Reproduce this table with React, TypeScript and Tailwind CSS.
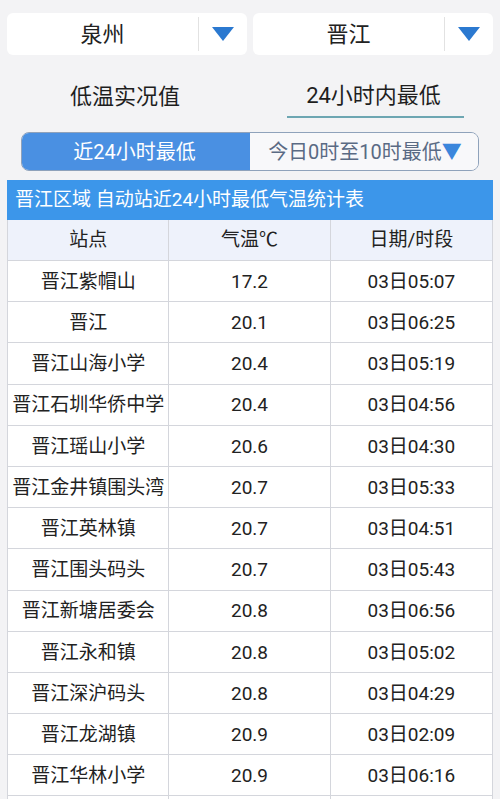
import React from "react";

const rows: [string, string, string][] = [
  ["晋江紫帽山", "17.2", "03日05:07"],
  ["晋江", "20.1", "03日06:25"],
  ["晋江山海小学", "20.4", "03日05:19"],
  ["晋江石圳华侨中学", "20.4", "03日04:56"],
  ["晋江瑶山小学", "20.6", "03日04:30"],
  ["晋江金井镇围头湾", "20.7", "03日05:33"],
  ["晋江英林镇", "20.7", "03日04:51"],
  ["晋江围头码头", "20.7", "03日05:43"],
  ["晋江新塘居委会", "20.8", "03日06:56"],
  ["晋江永和镇", "20.8", "03日05:02"],
  ["晋江深沪码头", "20.8", "03日04:29"],
  ["晋江龙湖镇", "20.9", "03日02:09"],
  ["晋江华林小学", "20.9", "03日06:16"],
];

function Tri() {
  return (
    <svg width="22" height="14" viewBox="0 0 22 14">
      <polygon points="0,0 22,0 11,14" fill="#2b79d0" />
    </svg>
  );
}

function Select({ label }: { label: string }) {
  return (
    <div className="flex-1 h-[42px] bg-white rounded-[6px] flex">
      <div className="flex-1 flex items-center justify-center text-[22px] text-[#222]">{label}</div>
      <div className="w-px bg-[#e2e2e2] my-[4px]" />
      <div className="w-[48px] flex items-center justify-center pr-[1px]">
        <Tri />
      </div>
    </div>
  );
}

export default function App() {
  return (
    <div
      className="w-[500px] h-[799px] overflow-hidden bg-[#f3f3f5]"
      style={{ fontFamily: '"Roboto", "Noto Sans CJK SC", sans-serif' }}
    >
      <div className="pt-[13px] px-[7px] flex gap-[6px]">
        <Select label="泉州" />
        <Select label="晋江" />
      </div>

      <div className="h-[70px] flex">
        <div className="flex-1 flex items-center justify-center pt-[12px] text-[22px] text-[#1e1e1e]">低温实况值</div>
        <div className="flex-1 flex items-center justify-center pt-[12px]">
          <div className="w-[177px] h-[44px] flex items-center justify-center text-[22px] text-[#1e1e1e] border-b-2 border-[#6da6b2] pr-[3px]">
            24小时内最低
          </div>
        </div>
      </div>

      <div className="mt-[7px] mx-[21px] h-[39px] rounded-[8px] border border-[#8fa2bb] flex overflow-hidden">
        <div className="w-[228px] bg-[#4a90e2] text-white text-[20px] flex items-center justify-center pr-[3px]">
          近24小时最低
        </div>
        <div className="flex-1 bg-[#f8f8fa] text-[#5a6a84] text-[20px] flex items-center justify-center pl-[2px]">
          今日0时至10时最低<span className="text-[#3b86dc]">▼</span>
        </div>
      </div>

      <div className="mt-[9px] mx-[7px]">
        <div className="h-[40px] bg-[#3c96ea] text-white text-[19px] flex items-center pl-[8px]">
          晋江区域 自动站近24小时最低气温统计表
        </div>
        <div className="grid grid-cols-3 h-[41px] bg-[#eef2fb] border-l border-r border-b border-[#d4d6dc] text-[19px] text-[#222]">
          <div className="flex items-center justify-center border-r border-[#d4d6dc] pt-[1px]">站点</div>
          <div className="flex items-center justify-center border-r border-[#d4d6dc] pt-[1px]">气温℃</div>
          <div className="flex items-center justify-center pt-[1px]">日期/时段</div>
        </div>
        {rows.map((r, i) => (
          <div
            key={i}
            className="grid grid-cols-3 h-[41.2px] bg-white border-l border-r border-b border-[#d4d6dc] text-[19px] text-[#222]"
          >
            <div className="flex items-center justify-center border-r border-[#d4d6dc] whitespace-nowrap pt-[2px]">{r[0]}</div>
            <div className="flex items-center justify-center border-r border-[#d4d6dc] pt-[2px]">{r[1]}</div>
            <div className="flex items-center justify-center pt-[2px]">{r[2]}</div>
          </div>
        ))}
        <div className="grid grid-cols-3 h-[41.2px] bg-white border-l border-r border-[#d4d6dc]">
          <div className="border-r border-[#d4d6dc]" />
          <div className="border-r border-[#d4d6dc]" />
          <div />
        </div>
      </div>
    </div>
  );
}
